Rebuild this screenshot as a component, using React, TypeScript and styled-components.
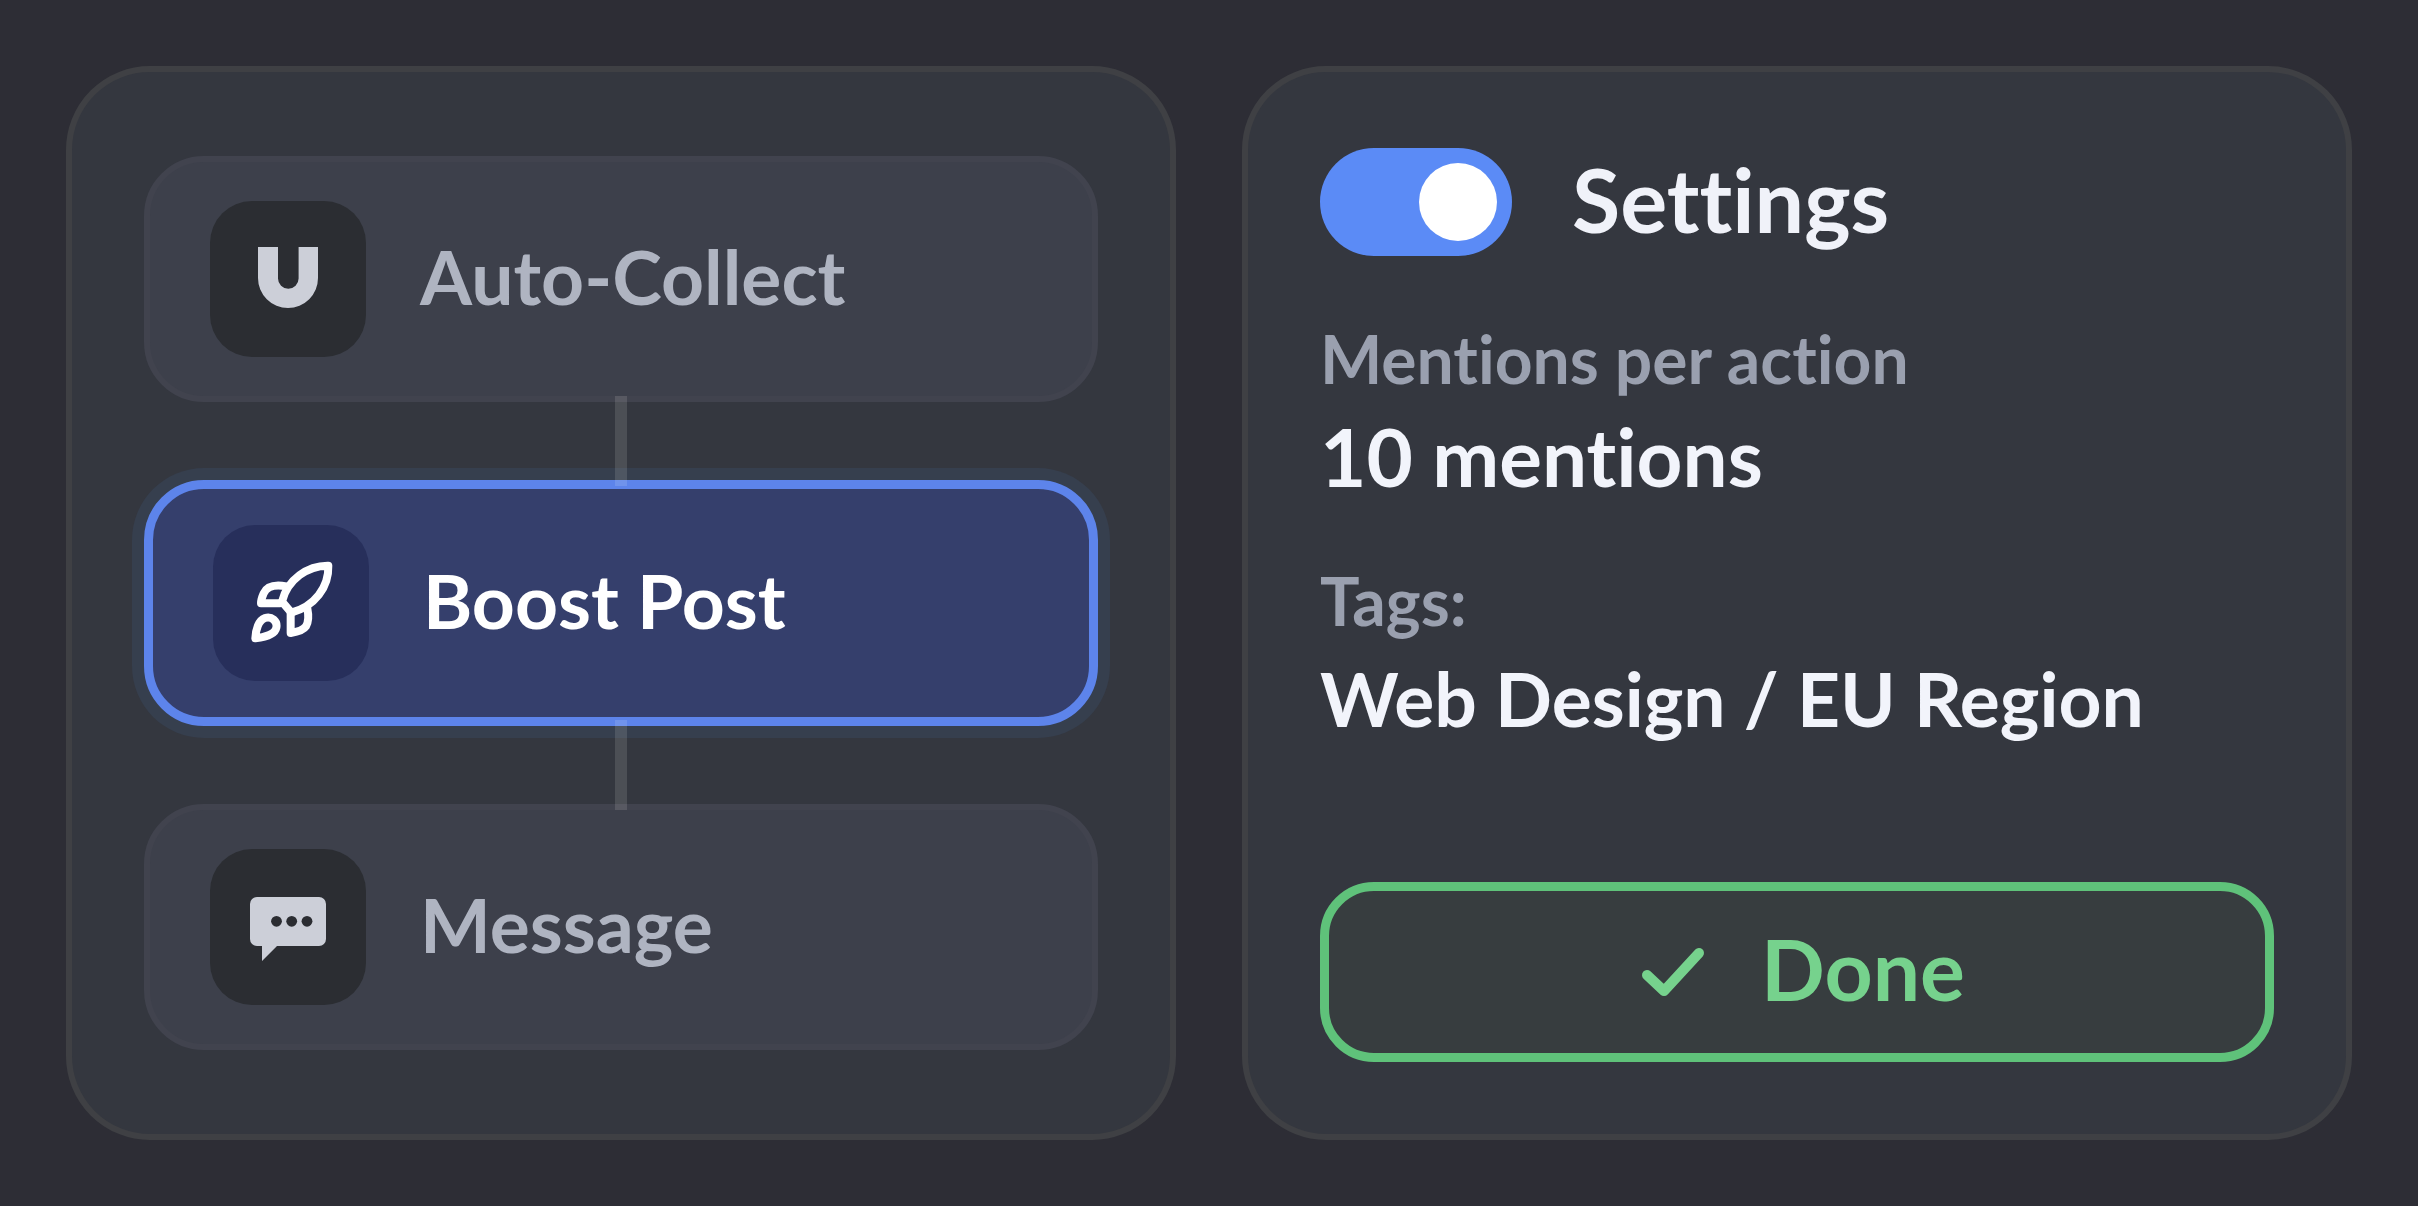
import React, { useState } from "react";
import styled, { createGlobalStyle, css } from "styled-components";

const GlobalStyle = createGlobalStyle`
  *, *::before, *::after { box-sizing: border-box; }
  body {
    margin: 0;
    background: #2d2d35;
    font-family: Lato, "Liberation Sans", sans-serif;
    font-variant-ligatures: none;
  }
  button, input { font: inherit; font-variant-ligatures: none; }
`;

const Page = styled.main`
  display: grid;
  grid-template-columns: 1fr 1fr;
  gap: 66px;
  padding: 66px;
`;

const Panel = styled.section`
  display: flex;
  flex-direction: column;
  border: 6px solid #3f4044;
  border-radius: 84px;
  background: #34373f;
`;

const FlowPanel = styled(Panel)`
  align-items: stretch;
  padding: 84px 72px;
`;

const SettingsPanel = styled(Panel)`
  justify-content: space-between;
  padding: 72px;
`;

const Step = styled.button<{ $active: boolean }>`
  display: flex;
  align-items: center;
  gap: 54px;
  height: 246px;
  padding: 0 60px;
  border: 6px solid #41434e;
  border-radius: 60px;
  background: #3d404b;
  color: #afb4c1;
  font-size: 75px;
  font-weight: 700;
  line-height: 96px;
  text-align: left;
  cursor: pointer;
  ${(p) =>
    p.$active &&
    css`
      border: 9px solid #5d84eb;
      background: #353f6c;
      box-shadow: 0 0 0 12px #363f4e;
      color: #ffffff;
    `}
`;

const ButtonText = styled.span`
  padding-bottom: 6px;
`;

const StepIcon = styled.span<{ $active: boolean }>`
  display: flex;
  align-items: center;
  justify-content: center;
  flex: none;
  width: 156px;
  height: 156px;
  border-radius: 42px;
  background: ${(p) => (p.$active ? "#272f5b" : "#2b2d32")};
  color: ${(p) => (p.$active ? "#ffffff" : "#cccfd8")};
`;

const Connector = styled.div`
  z-index: 1;
  align-self: center;
  width: 12px;
  height: 90px;
  margin: -6px 0;
  background: rgba(255, 255, 250, 0.12);
`;

const Header = styled.div`
  display: flex;
  align-items: center;
  gap: 60px;
`;

const Toggle = styled.input`
  appearance: none;
  display: flex;
  flex: none;
  width: 192px;
  height: 108px;
  margin: 0;
  padding: 15px;
  border-radius: 54px;
  background: #4a4d58;
  cursor: pointer;
  &::before {
    content: "";
    width: 78px;
    height: 78px;
    border-radius: 50%;
    background: #ffffff;
  }
  &:checked {
    justify-content: flex-end;
    background: #5b8bf6;
  }
`;

const Title = styled.label`
  padding-bottom: 6px;
  color: #f0f2f9;
  font-size: 88px;
  font-weight: 700;
  line-height: 110px;
`;

const Fields = styled.dl`
  display: flex;
  flex-direction: column;
  gap: 48px;
  margin: 54px 0 0;
`;

const FieldName = styled.dt`
  color: #9aa0af;
  font-size: 66px;
  font-weight: 700;
  line-height: 90px;
`;

const FieldValue = styled.dd<{ $large?: boolean }>`
  margin: 0;
  color: #f2f4fb;
  font-size: ${(p) => (p.$large ? 80 : 75)}px;
  font-weight: 700;
  line-height: 104px;
`;

const DoneButton = styled.button`
  display: flex;
  align-items: center;
  justify-content: center;
  gap: 54px;
  height: 180px;
  padding: 0 0 0 6px;
  border: 9px solid #5fc27a;
  border-radius: 54px;
  background: #373d3f;
  color: #76d28d;
  font-size: 84px;
  font-weight: 700;
  line-height: 96px;
  cursor: pointer;
`;

const MagnetIcon = () => (
  <svg width="84" height="84" viewBox="0 0 84 84" fill="currentColor" aria-hidden="true">
    <path d="M12 10H32V41.5a10.3 10.3 0 0 0 20.6 0V10H72V41a30 30 0 0 1-60 0Z" />
  </svg>
);

const RocketIcon = () => (
  <svg
    width="84"
    height="84"
    viewBox="387 333 252 252"
    fill="none"
    stroke="currentColor"
    strokeWidth="24"
    strokeLinecap="round"
    strokeLinejoin="round"
    aria-hidden="true"
  >
    <path d="M625 347C564 346 502 388 486 455L514 488C584 469 627 412 625 347Z" />
    <path d="M499 409C462 402 441 408 431 430C425 443 423 452 423 460H480" />
    <path d="M512 490V549C532 546 550 541 558 529C566 515 566 495 562 476" />
    <path d="M406 565C407 540 415 511 435 504C455 498 473 513 469 533C465 553 432 562 406 565Z" />
  </svg>
);

const MessageIcon = () => (
  <svg width="84" height="84" viewBox="0 0 84 84" aria-hidden="true">
    <path
      fill="currentColor"
      d="M11 12H73a7 7 0 0 1 7 7V54a7 7 0 0 1-7 7H31L16 76V61H11a7 7 0 0 1-7-7V19a7 7 0 0 1 7-7Z"
    />
    <g fill="#2b2d32">
      <circle cx="30.5" cy="36.3" r="5.4" />
      <circle cx="45.7" cy="36.3" r="5.4" />
      <circle cx="61" cy="36.3" r="5.4" />
    </g>
  </svg>
);

const CheckIcon = () => (
  <svg width="72" height="72" viewBox="0 0 72 72" fill="none" stroke="currentColor" strokeWidth="10" strokeLinecap="round" strokeLinejoin="round" aria-hidden="true">
    <path d="M12 39L29 55L64 17" />
  </svg>
);

const steps = [
  { name: "Auto-Collect", Icon: MagnetIcon },
  { name: "Boost Post", Icon: RocketIcon },
  { name: "Message", Icon: MessageIcon },
];

export default function App() {
  const [current, setCurrent] = useState("Boost Post");
  const [enabled, setEnabled] = useState(true);

  return (
    <>
      <GlobalStyle />
      <Page>
        <FlowPanel aria-label="Steps">
          {steps.map(({ name, Icon }, i) => (
            <React.Fragment key={name}>
              {i > 0 && <Connector />}
              <Step
                type="button"
                $active={name === current}
                aria-pressed={name === current}
                onClick={() => setCurrent(name)}
              >
                <StepIcon $active={name === current}>
                  <Icon />
                </StepIcon>
                <ButtonText>{name}</ButtonText>
              </Step>
            </React.Fragment>
          ))}
        </FlowPanel>
        <SettingsPanel aria-label="Settings">
          <div>
            <Header>
              <Toggle
                id="settings-enabled"
                type="checkbox"
                role="switch"
                checked={enabled}
                onChange={(e) => setEnabled(e.target.checked)}
              />
              <Title htmlFor="settings-enabled">Settings</Title>
            </Header>
            <Fields>
              <div>
                <FieldName>Mentions per action</FieldName>
                <FieldValue $large>10 mentions</FieldValue>
              </div>
              <div>
                <FieldName>Tags:</FieldName>
                <FieldValue>Web Design / EU Region</FieldValue>
              </div>
            </Fields>
          </div>
          <DoneButton type="button">
            <CheckIcon />
            <ButtonText>Done</ButtonText>
          </DoneButton>
        </SettingsPanel>
      </Page>
    </>
  );
}
